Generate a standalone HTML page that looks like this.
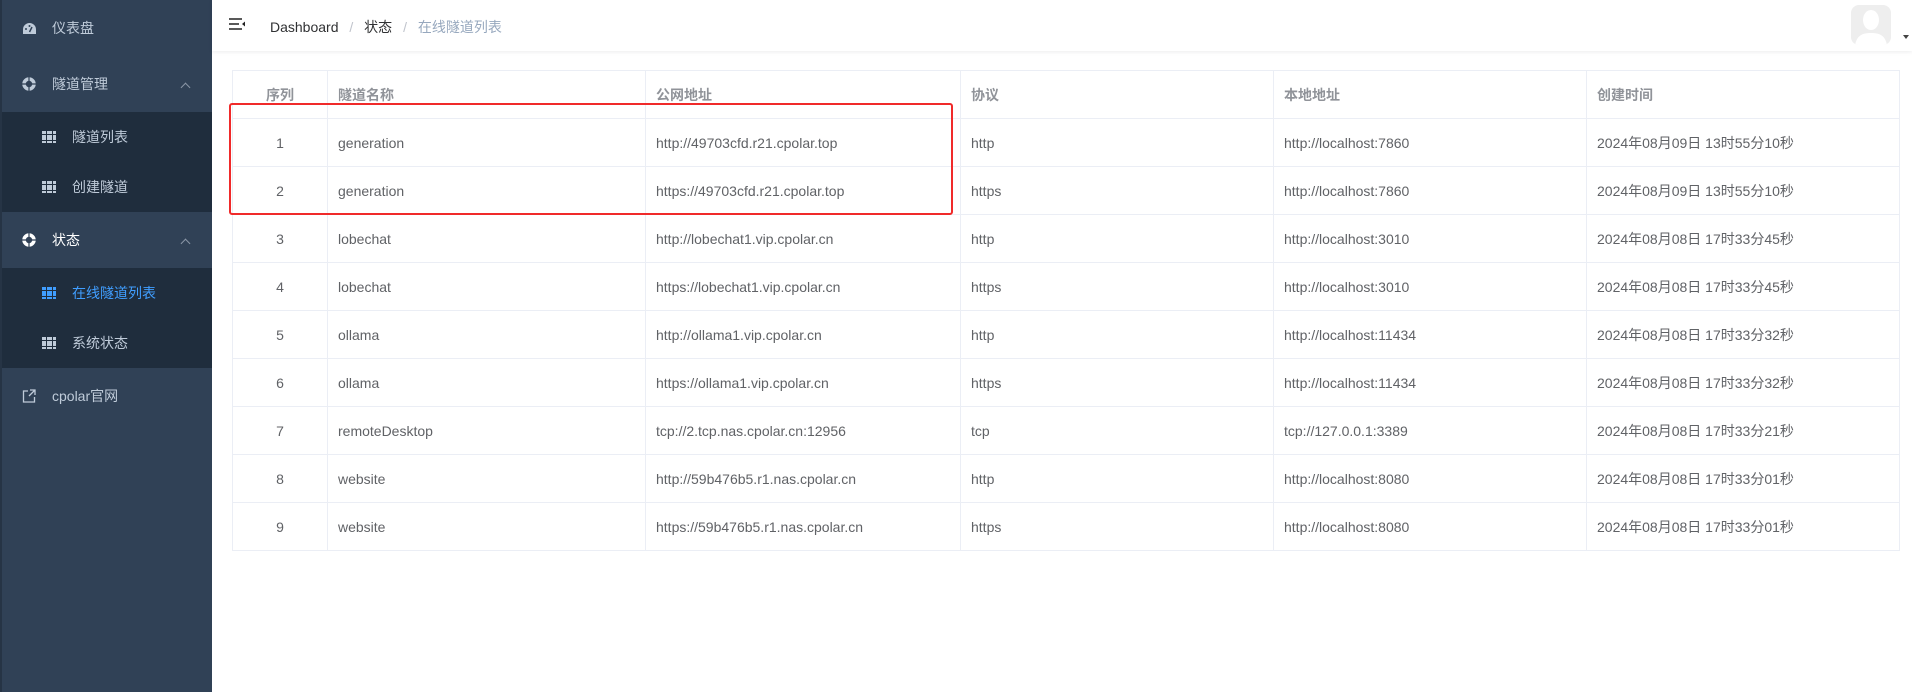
<!DOCTYPE html>
<html><head><meta charset="utf-8"><style>
*{margin:0;padding:0;box-sizing:border-box}
body{width:1912px;height:692px;overflow:hidden;background:#fff;font-family:"Liberation Sans","Noto Sans CJK SC",sans-serif;position:relative}
.sb{position:absolute;left:0;top:0;width:212px;height:692px;background:#304156;border-left:2px solid #263445}
.it{position:absolute;left:0;width:210px;color:#bfcbd9;font-size:14px;display:flex;align-items:center}
.sub{background:#1f2d3d}
.ic{position:absolute;left:20px}
.sic{position:absolute;left:40px;width:14px;height:12px;background:#bfcbd9}
.sic:before{content:"";position:absolute;left:4px;top:0;width:5px;height:12px;border-left:1px solid #1f2d3d;border-right:1px solid #1f2d3d}
.sic:after{content:"";position:absolute;left:0;top:3px;width:14px;height:5px;border-top:1px solid #1f2d3d;border-bottom:1px solid #1f2d3d}
.act{color:#409eff}
.act .sic{background:#409eff}
.car{position:absolute;left:180px;width:7px;height:7px;border-left:1px solid #8a96a6;border-top:1px solid #8a96a6;transform:rotate(45deg)}
.hd{position:absolute;left:212px;top:0;right:0;height:51px;box-shadow:0 1px 4px rgba(0,21,41,.08)}
table{position:absolute;left:232px;top:70px;width:1668px;border-collapse:collapse;font-size:14px;color:#606266}
td,th{border:1px solid #ebeef5;height:48px;padding:0 10px;text-align:left;font-weight:normal;line-height:20px;vertical-align:middle}
th{color:#909399;font-weight:bold}
td:first-child,th:first-child{text-align:center}
</style></head><body>
<div class="sb">
 <div class="it" style="top:0;height:56px"><svg class="ic" width="15" height="13" viewBox="0 0 15 13"><path d="M7.5 1A6.5 6.5 0 0 0 1 7.5V12h13V7.5A6.5 6.5 0 0 0 7.5 1z" fill="#bfcbd9"/><path d="M7.5 10L10 5" stroke="#304156" stroke-width="1.5"/><circle cx="4" cy="7" r="1" fill="#304156"/><circle cx="7.5" cy="4" r="1" fill="#304156"/></svg><span style="margin-left:50px">仪表盘</span></div>
 <div class="it" style="top:56px;height:56px"><svg class="ic" width="14" height="14" viewBox="0 0 14 14"><circle cx="7" cy="7" r="5" fill="none" stroke="#bfcbd9" stroke-width="3.5"/><path d="M7 0v14M0 7h14" stroke="#304156" stroke-width="1.2"/></svg><span style="margin-left:50px">隧道管理</span><div class="car" style="top:28px"></div></div>
 <div class="it sub" style="top:112px;height:50px"><div class="sic"></div><span style="margin-left:70px">隧道列表</span></div>
 <div class="it sub" style="top:162px;height:50px"><div class="sic"></div><span style="margin-left:70px">创建隧道</span></div>
 <div class="it" style="top:212px;height:56px"><svg class="ic" width="14" height="14" viewBox="0 0 14 14"><circle cx="7" cy="7" r="5" fill="none" stroke="#fff" stroke-width="3.5"/><path d="M7 0v14M0 7h14" stroke="#304156" stroke-width="1.2"/></svg><span style="margin-left:50px;color:#fff">状态</span><div class="car" style="top:28px"></div></div>
 <div class="it sub act" style="top:268px;height:50px"><div class="sic"></div><span style="margin-left:70px">在线隧道列表</span></div>
 <div class="it sub" style="top:318px;height:50px"><div class="sic"></div><span style="margin-left:70px">系统状态</span></div>
 <div class="it" style="top:368px;height:56px"><svg class="ic" width="14" height="14" viewBox="0 0 14 14" fill="none" stroke="#bfcbd9" stroke-width="1.3"><path d="M6 2H1.5v11h11V8"/><path d="M8 1h5v5M13 1L7 7"/></svg><span style="margin-left:50px">cpolar官网</span></div>
</div>
<div class="hd">
 <svg style="position:absolute;left:17px;top:18px" width="16" height="13" viewBox="0 0 16 13"><path d="M0 1h13M0 6h10M0 11h13" stroke="#222" stroke-width="1.6"/><path d="M16 3.5v5l-3-2.5z" fill="#222"/></svg>
 <div style="position:absolute;left:58px;top:17px;font-size:14px;color:#303133">Dashboard <span style="color:#c0c4cc;margin:0 7px">/</span> 状态 <span style="color:#c0c4cc;margin:0 7px">/</span> <span style="color:#97a8be">在线隧道列表</span></div>
 <div style="position:absolute;left:1639px;top:5px;width:40px;height:40px;border-radius:8px;background:#eee;overflow:hidden"><svg width="40" height="40" viewBox="0 0 40 40"><ellipse cx="20" cy="15" rx="8" ry="10" fill="#fff"/><path d="M4 40c2-10 8-12 16-12s14 2 16 12z" fill="#fff"/></svg></div>
 <div style="position:absolute;left:1691px;top:35px;border:3px solid transparent;border-top:4px solid #444"></div>
</div>
<table>
<tr><th style="width:95px">序列</th><th style="width:318px">隧道名称</th><th style="width:315px">公网地址</th><th style="width:313px">协议</th><th style="width:313px">本地地址</th><th>创建时间</th></tr>
<tr><td>1</td><td>generation</td><td>http://49703cfd.r21.cpolar.top</td><td>http</td><td>http://localhost:7860</td><td>2024年08月09日 13时55分10秒</td></tr>
<tr><td>2</td><td>generation</td><td>https://49703cfd.r21.cpolar.top</td><td>https</td><td>http://localhost:7860</td><td>2024年08月09日 13时55分10秒</td></tr>
<tr><td>3</td><td>lobechat</td><td>http://lobechat1.vip.cpolar.cn</td><td>http</td><td>http://localhost:3010</td><td>2024年08月08日 17时33分45秒</td></tr>
<tr><td>4</td><td>lobechat</td><td>https://lobechat1.vip.cpolar.cn</td><td>https</td><td>http://localhost:3010</td><td>2024年08月08日 17时33分45秒</td></tr>
<tr><td>5</td><td>ollama</td><td>http://ollama1.vip.cpolar.cn</td><td>http</td><td>http://localhost:11434</td><td>2024年08月08日 17时33分32秒</td></tr>
<tr><td>6</td><td>ollama</td><td>https://ollama1.vip.cpolar.cn</td><td>https</td><td>http://localhost:11434</td><td>2024年08月08日 17时33分32秒</td></tr>
<tr><td>7</td><td>remoteDesktop</td><td>tcp://2.tcp.nas.cpolar.cn:12956</td><td>tcp</td><td>tcp://127.0.0.1:3389</td><td>2024年08月08日 17时33分21秒</td></tr>
<tr><td>8</td><td>website</td><td>http://59b476b5.r1.nas.cpolar.cn</td><td>http</td><td>http://localhost:8080</td><td>2024年08月08日 17时33分01秒</td></tr>
<tr><td>9</td><td>website</td><td>https://59b476b5.r1.nas.cpolar.cn</td><td>https</td><td>http://localhost:8080</td><td>2024年08月08日 17时33分01秒</td></tr>
</table>
<div style="position:absolute;left:229px;top:103px;width:724px;height:112px;border:2px solid #f02a2a;border-radius:3px"></div>
</body></html>
